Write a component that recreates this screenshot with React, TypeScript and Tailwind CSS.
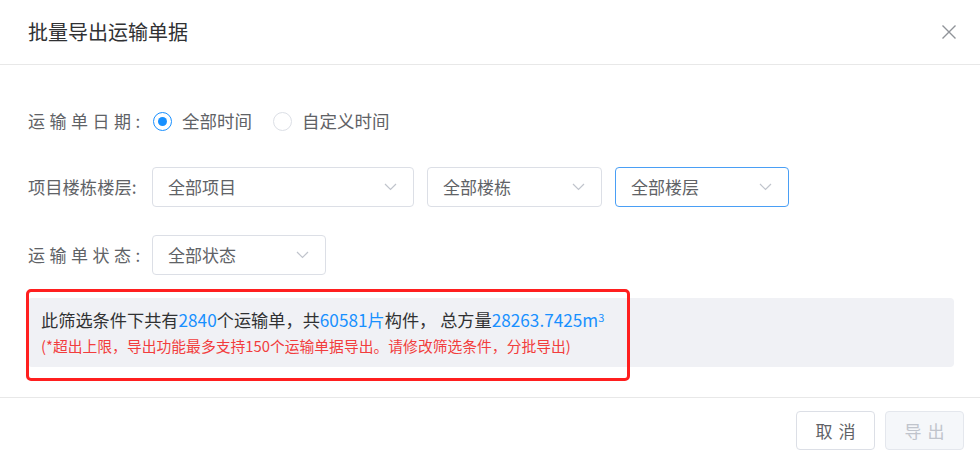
import React from 'react';

const FONT = '"Noto Sans CJK SC", "Noto Sans", sans-serif';

function Chevron() {
  return (
    <svg width="13" height="8" viewBox="0 0 13 8" className="shrink-0">
      <path d="M1 1 L6.5 6.5 L12 1" fill="none" stroke="#c0c4cc" strokeWidth="1.2" />
    </svg>
  );
}

function Select({ text, width, active }: { text: string; width: string; active?: boolean }) {
  return (
    <div
      className={`${width} h-[40px] flex items-center justify-between pl-[15px] pr-[16px] rounded-[4px] border bg-white ${
        active ? 'border-[#4a9ff5]' : 'border-[#dcdfe6]'
      }`}
    >
      <span className="text-[17px] text-[#606266]">{text}</span>
      <Chevron />
    </div>
  );
}

function Radio({ checked, label }: { checked?: boolean; label: string }) {
  return (
    <div className="flex items-center">
      <span
        className={`w-[19px] h-[19px] rounded-full border flex items-center justify-center ${
          checked ? 'border-[#1890ff]' : 'border-[#dcdfe6]'
        }`}
      >
        {checked && <span className="w-[9px] h-[9px] rounded-full bg-[#1890ff]" />}
      </span>
      <span className="ml-[10px] text-[17.5px] text-[#606266]">{label}</span>
    </div>
  );
}

export default function App() {
  return (
    <div className="relative w-[980px] h-[459px] bg-white overflow-hidden" style={{ fontFamily: FONT }}>
      {/* header */}
      <div className="h-[65px] border-b border-[#e8e8e8] flex items-center justify-between pl-[28px] pr-[23px]">
        <span className="text-[20px] text-[#303133]">批量导出运输单据</span>
        <svg width="16" height="16" viewBox="0 0 16 16">
          <path d="M1.5 1.5 L14.5 14.5 M14.5 1.5 L1.5 14.5" stroke="#909399" strokeWidth="1.4" fill="none" />
        </svg>
      </div>

      {/* body */}
      <div className="pl-[28px] pr-[26px] pt-[36px] pb-[30px]">
        <div className="h-[40px] flex items-center">
          <span className="w-[124px] shrink-0 text-[17px] text-[#606266] tracking-[4.5px]">运输单日期:</span>
          <div className="flex items-center gap-[21px] ml-[1px]">
            <Radio checked label="全部时间" />
            <Radio label="自定义时间" />
          </div>
        </div>

        <div className="mt-[26px] h-[40px] flex items-center">
          <span className="w-[124px] shrink-0 text-[17.3px] text-[#606266]">项目楼栋楼层:</span>
          <div className="flex items-center gap-[13px]">
            <Select text="全部项目" width="w-[262px]" />
            <Select text="全部楼栋" width="w-[175px]" />
            <Select text="全部楼层" width="w-[174px]" active />
          </div>
        </div>

        <div className="mt-[28px] h-[40px] flex items-center">
          <span className="w-[124px] shrink-0 text-[17px] text-[#606266] tracking-[4.5px]">运输单状态:</span>
          <Select text="全部状态" width="w-[174px]" />
        </div>

        <div className="mt-[23px] h-[69px] rounded-[4px] bg-[#f0f1f5] pl-[13px] pt-[10px]">
          <div className="text-[17.2px] leading-[24px] text-[#303133]">
            此筛选条件下共有<span className="text-[#1890ff]">2840</span>个运输单，共
            <span className="text-[#1890ff]">60581片</span>构件， 总方量
            <span className="text-[#1890ff]">
              28263.7425m<sup className="text-[11px]">3</sup>
            </span>
          </div>
          <div className="mt-[4px] text-[14.8px] leading-[20px] text-[#f23d3d]">
            (*超出上限，导出功能最多支持150个运输单据导出。请修改筛选条件，分批导出)
          </div>
        </div>
      </div>

      {/* footer */}
      <div className="border-t border-[#e8e8e8] flex justify-end gap-[10px] pt-[13px] pr-[16px]">
        <button className="w-[79px] h-[39px] rounded-[4px] border border-[#dcdfe6] bg-white text-[17px] text-[#606266] tracking-[6px] pl-[6px]">
          取消
        </button>
        <button className="w-[79px] h-[39px] rounded-[4px] border border-[#e4e7ed] bg-[#f5f7fa] text-[17px] text-[#c0c4cc] tracking-[6px] pl-[6px]">
          导出
        </button>
      </div>

      {/* annotation */}
      <div className="absolute left-[26px] top-[289px] w-[604px] h-[92px] rounded-[5px] border-[3px] border-[#ff1f1f]" />
    </div>
  );
}
